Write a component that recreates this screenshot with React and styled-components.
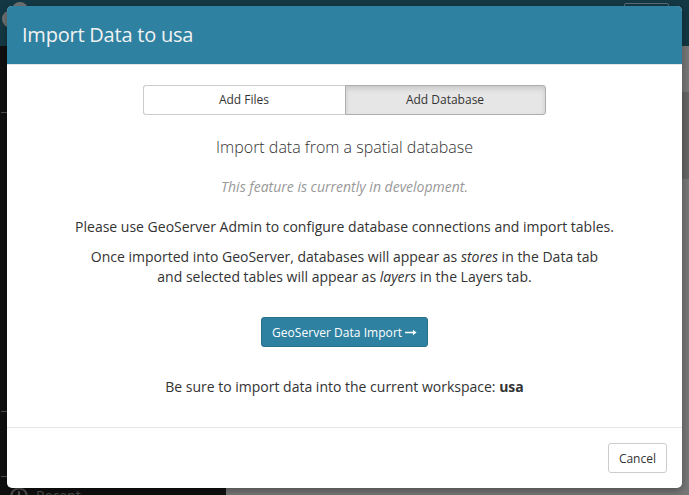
import React from "react";
import styled, { createGlobalStyle } from "styled-components";

const GlobalStyle = createGlobalStyle`
  *, *::before, *::after { box-sizing: border-box; }
  body {
    margin: 0;
    overflow: hidden;
    font-family: "Open Sans", "Noto Sans", sans-serif;
    font-size: 14px;
    line-height: 20px;
    color: #333;
  }
`;

const Screen = styled.div`
  position: relative;
  width: 100%;
  height: 100vh;
  overflow: hidden;
`;

const Page = styled.div`
  display: flex;
  flex-direction: column;
  height: 100%;
`;

const TopBar = styled.header`
  display: flex;
  justify-content: space-between;
  flex: 0 0 46px;
  padding: 2px 20px 0 2px;
  background: #143844;
`;

const TopButton = styled.div`
  width: 45px;
  height: 30px;
  margin-top: 1px;
  border: 1px solid #5d6e74;
  border-radius: 2px;
`;

const Body = styled.div`
  display: flex;
  flex: 1;
  min-height: 0;
`;

const Sidebar = styled.nav`
  display: flex;
  flex-direction: column;
  width: 226px;
  padding-left: 1px;
  background: #101010;
`;

const NavSection = styled.div`
  flex: 0 0 ${(p) => p.$height}px;
  border-bottom: 1px solid #505050;
`;

const NavItem = styled.div`
  display: flex;
  flex: none;
  align-items: center;
  gap: 8px;
  height: 20px;
  margin-top: 9px;
  padding-left: 9px;
  color: #505050;
  font-size: 14px;
  white-space: nowrap;
`;

const Main = styled.main`
  flex: 1;
  background: #787878;
`;

const MainBand = styled.div`
  height: 87px;
  margin-top: 46px;
  background: #676767;
`;

const Overlay = styled.div`
  position: absolute;
  inset: 0;
  padding: 6px 7px 7px;
`;

const Dialog = styled.section`
  display: flex;
  flex-direction: column;
  height: 100%;
  overflow: hidden;
  border-radius: 5px;
  background: #fff;
  box-shadow: 0 3px 9px rgba(0, 0, 0, 0.35);
`;

const DialogHeader = styled.div`
  flex: 0 0 59px;
  padding: 15px;
  border-bottom: 1px solid #e5e5e5;
  background: #2e81a1;
`;

const Title = styled.h4`
  margin: 0;
  color: #f2f2f2;
  font-size: 20px;
  font-weight: 400;
  letter-spacing: -0.22px;
  line-height: 28px;
`;

const DialogBody = styled.div`
  display: flex;
  flex: 1;
  flex-direction: column;
  align-items: center;
  padding-top: 20px;
  text-align: center;
`;

const DialogFooter = styled.div`
  display: flex;
  flex: 0 0 61px;
  justify-content: flex-end;
  padding: 15px;
  border-top: 1px solid #e5e5e5;
`;

const Button = styled.button`
  height: 30px;
  padding: 2px 10px 0;
  border: 1px solid ${(p) => (p.$primary ? "#28718d" : "#ccc")};
  border-radius: 3px;
  background: ${(p) => (p.$primary ? "#2e81a1" : "#fff")};
  color: ${(p) => (p.$primary ? "#fff" : "#333")};
  font-family: inherit;
  font-size: 12px;
  line-height: 18px;
  white-space: nowrap;
`;

const Tabs = styled.div`
  display: flex;
  width: 403px;
`;

const Tab = styled(Button)`
  flex: 0 0 202px;
  padding: 0 11px 0 10px;
  ${(p) =>
    p.$active
      ? `
    flex-basis: 201px;
    border-color: #adadad;
    border-radius: 0 3px 3px 0;
    background: #e6e6e6;
    box-shadow: inset 0 3px 5px rgba(0, 0, 0, 0.125);
  `
      : "border-right: 0; border-radius: 3px 0 0 3px;"}
`;

const Subtitle = styled.h5`
  margin: 22px 0 0;
  font-size: 16px;
  font-weight: 300;
  line-height: 20px;
`;

const Paragraph = styled.p`
  margin: ${(p) => p.$top}px 0 0;
  color: ${(p) => (p.$muted ? "#999" : "#333")};
  font-style: ${(p) => (p.$muted ? "italic" : "normal")};
`;

const ImportButton = styled(Button)`
  display: flex;
  align-items: center;
  gap: 3px;
  width: 167px;
  margin-top: 30px;
  letter-spacing: 0.04px;
`;

const LogoMark = () => (
  <svg width="34" height="26" viewBox="0 0 34 26" fill="#707374">
    <circle cx="18" cy="8" r="8" />
    <circle cx="9" cy="17" r="9" />
  </svg>
);

const ArrowIcon = () => (
  <svg width="13" height="8" viewBox="0 0 13 8" fill="#fff">
    <path d="M0 2.7h8.7V.5L12.7 3.5 8.7 6.5V4.4H0z" />
  </svg>
);

const ClockIcon = () => (
  <svg width="18" height="18" viewBox="0 0 18 18" fill="none" stroke="#505050" strokeWidth="2.2">
    <circle cx="9" cy="9" r="7.7" />
    <path d="M9 4v6H5" />
  </svg>
);

export default function App() {
  return (
    <Screen>
      <GlobalStyle />
      <Page>
        <TopBar>
          <LogoMark />
          <TopButton />
        </TopBar>
        <Body>
          <Sidebar>
            <NavSection $height={67} />
            <NavSection $height={299} />
            <NavSection $height={65} />
            <NavItem>
              <ClockIcon />
              Recent
            </NavItem>
          </Sidebar>
          <Main>
            <MainBand />
          </Main>
        </Body>
      </Page>
      <Overlay>
        <Dialog role="dialog" aria-label="Import Data to usa">
          <DialogHeader>
            <Title>Import Data to usa</Title>
          </DialogHeader>
          <DialogBody>
            <Tabs>
              <Tab>Add Files</Tab>
              <Tab $active>Add Database</Tab>
            </Tabs>
            <Subtitle>Import data from a spatial database</Subtitle>
            <Paragraph $top={20} $muted>
              This feature is currently in development.
            </Paragraph>
            <Paragraph $top={20}>
              Please use GeoServer Admin to configure database connections and import tables.
            </Paragraph>
            <Paragraph $top={10}>
              Once imported into GeoServer, databases will appear as <em>stores</em> in the Data tab
              <br />
              and selected tables will appear as <em>layers</em> in the Layers tab.
            </Paragraph>
            <ImportButton $primary>
              GeoServer Data Import
              <ArrowIcon />
            </ImportButton>
            <Paragraph $top={30}>
              Be sure to import data into the current workspace: <strong>usa</strong>
            </Paragraph>
          </DialogBody>
          <DialogFooter>
            <Button>Cancel</Button>
          </DialogFooter>
        </Dialog>
      </Overlay>
    </Screen>
  );
}
